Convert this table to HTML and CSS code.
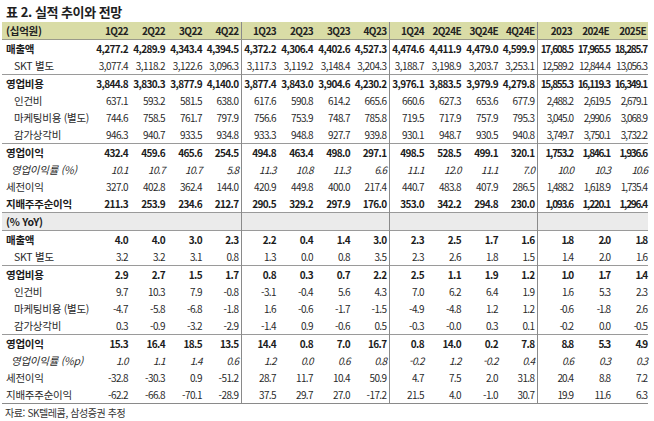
FILE: index.html
```html
<!DOCTYPE html>
<html lang="ko">
<head>
<meta charset="utf-8">
<link rel="stylesheet" href="styles.css">
</head>
<body>
<div class="page">
<div class="title">표 2. 실적 추이와 전망</div>
<table class="fin">
<colgroup><col class="c-label"><col span="15" class="c-num"></colgroup>
<thead>
<tr class="hd"><th class="l">(십억원)</th><th>1Q22</th><th>2Q22</th><th>3Q22</th><th class="v">4Q22</th><th>1Q23</th><th>2Q23</th><th>3Q23</th><th class="v">4Q23</th><th>1Q24</th><th>2Q24E</th><th>3Q24E</th><th class="v">4Q24E</th><th>2023</th><th>2024E</th><th>2025E</th></tr>
</thead>
<tbody>
<tr class="b"><td class="l">매출액</td><td>4,277.2</td><td>4,289.9</td><td>4,343.4</td><td class="v">4,394.5</td><td>4,372.2</td><td>4,306.4</td><td>4,402.6</td><td class="v">4,527.3</td><td>4,474.6</td><td>4,411.9</td><td>4,479.0</td><td class="v">4,599.9</td><td>17,608.5</td><td>17,965.5</td><td>18,285.7</td></tr>
<tr><td class="l in">SKT 별도</td><td>3,077.4</td><td>3,118.2</td><td>3,122.6</td><td class="v">3,096.3</td><td>3,117.3</td><td>3,119.2</td><td>3,148.4</td><td class="v">3,204.3</td><td>3,188.7</td><td>3,198.9</td><td>3,203.7</td><td class="v">3,253.1</td><td>12,589.2</td><td>12,844.4</td><td>13,056.3</td></tr>
<tr class="b sep"><td class="l">영업비용</td><td>3,844.8</td><td>3,830.3</td><td>3,877.9</td><td class="v">4,140.0</td><td>3,877.4</td><td>3,843.0</td><td>3,904.6</td><td class="v">4,230.2</td><td>3,976.1</td><td>3,883.5</td><td>3,979.9</td><td class="v">4,279.8</td><td>15,855.3</td><td>16,119.3</td><td>16,349.1</td></tr>
<tr><td class="l in">인건비</td><td>637.1</td><td>593.2</td><td>581.5</td><td class="v">638.0</td><td>617.6</td><td>590.8</td><td>614.2</td><td class="v">665.6</td><td>660.6</td><td>627.3</td><td>653.6</td><td class="v">677.9</td><td>2,488.2</td><td>2,619.5</td><td>2,679.1</td></tr>
<tr><td class="l in">마케팅비용 (별도)</td><td>744.6</td><td>758.5</td><td>761.7</td><td class="v">797.9</td><td>756.6</td><td>753.9</td><td>748.7</td><td class="v">785.8</td><td>719.5</td><td>717.9</td><td>757.9</td><td class="v">795.3</td><td>3,045.0</td><td>2,990.6</td><td>3,068.9</td></tr>
<tr><td class="l in">감가상각비</td><td>946.3</td><td>940.7</td><td>933.5</td><td class="v">934.8</td><td>933.3</td><td>948.8</td><td>927.7</td><td class="v">939.8</td><td>930.1</td><td>948.7</td><td>930.5</td><td class="v">940.8</td><td>3,749.7</td><td>3,750.1</td><td>3,732.2</td></tr>
<tr class="b sep"><td class="l">영업이익</td><td>432.4</td><td>459.6</td><td>465.6</td><td class="v">254.5</td><td>494.8</td><td>463.4</td><td>498.0</td><td class="v">297.1</td><td>498.5</td><td>528.5</td><td>499.1</td><td class="v">320.1</td><td>1,753.2</td><td>1,846.1</td><td>1,936.6</td></tr>
<tr class="it"><td class="l im">영업이익률 (%)</td><td>10.1</td><td>10.7</td><td>10.7</td><td class="v">5.8</td><td>11.3</td><td>10.8</td><td>11.3</td><td class="v">6.6</td><td>11.1</td><td>12.0</td><td>11.1</td><td class="v">7.0</td><td>10.0</td><td>10.3</td><td>10.6</td></tr>
<tr><td class="l">세전이익</td><td>327.0</td><td>402.8</td><td>362.4</td><td class="v">144.0</td><td>420.9</td><td>449.8</td><td>400.0</td><td class="v">217.4</td><td>440.7</td><td>483.8</td><td>407.9</td><td class="v">286.5</td><td>1,488.2</td><td>1,618.9</td><td>1,735.4</td></tr>
<tr class="b"><td class="l">지배주주순이익</td><td>211.3</td><td>253.9</td><td>234.6</td><td class="v">212.7</td><td>290.5</td><td>329.2</td><td>297.9</td><td class="v">176.0</td><td>353.0</td><td>342.2</td><td>294.8</td><td class="v">230.0</td><td>1,093.6</td><td>1,220.1</td><td>1,296.4</td></tr>
<tr class="gray sep b"><td class="l">(% YoY)</td><td></td><td></td><td></td><td class="v"></td><td></td><td></td><td></td><td class="v"></td><td></td><td></td><td></td><td class="v"></td><td></td><td></td><td></td></tr>
<tr class="b sep"><td class="l">매출액</td><td>4.0</td><td>4.0</td><td>3.0</td><td class="v">2.3</td><td>2.2</td><td>0.4</td><td>1.4</td><td class="v">3.0</td><td>2.3</td><td>2.5</td><td>1.7</td><td class="v">1.6</td><td>1.8</td><td>2.0</td><td>1.8</td></tr>
<tr><td class="l in">SKT 별도</td><td>3.2</td><td>3.2</td><td>3.1</td><td class="v">0.8</td><td>1.3</td><td>0.0</td><td>0.8</td><td class="v">3.5</td><td>2.3</td><td>2.6</td><td>1.8</td><td class="v">1.5</td><td>1.4</td><td>2.0</td><td>1.6</td></tr>
<tr class="b sep"><td class="l">영업비용</td><td>2.9</td><td>2.7</td><td>1.5</td><td class="v">1.7</td><td>0.8</td><td>0.3</td><td>0.7</td><td class="v">2.2</td><td>2.5</td><td>1.1</td><td>1.9</td><td class="v">1.2</td><td>1.0</td><td>1.7</td><td>1.4</td></tr>
<tr><td class="l in">인건비</td><td>9.7</td><td>10.3</td><td>7.9</td><td class="v">-0.8</td><td>-3.1</td><td>-0.4</td><td>5.6</td><td class="v">4.3</td><td>7.0</td><td>6.2</td><td>6.4</td><td class="v">1.9</td><td>1.6</td><td>5.3</td><td>2.3</td></tr>
<tr><td class="l in">마케팅비용 (별도)</td><td>-4.7</td><td>-5.8</td><td>-6.8</td><td class="v">-1.8</td><td>1.6</td><td>-0.6</td><td>-1.7</td><td class="v">-1.5</td><td>-4.9</td><td>-4.8</td><td>1.2</td><td class="v">1.2</td><td>-0.6</td><td>-1.8</td><td>2.6</td></tr>
<tr><td class="l in">감가상각비</td><td>0.3</td><td>-0.9</td><td>-3.2</td><td class="v">-2.9</td><td>-1.4</td><td>0.9</td><td>-0.6</td><td class="v">0.5</td><td>-0.3</td><td>-0.0</td><td>0.3</td><td class="v">0.1</td><td>-0.2</td><td>0.0</td><td>-0.5</td></tr>
<tr class="b sep"><td class="l">영업이익</td><td>15.3</td><td>16.4</td><td>18.5</td><td class="v">13.5</td><td>14.4</td><td>0.8</td><td>7.0</td><td class="v">16.7</td><td>0.8</td><td>14.0</td><td>0.2</td><td class="v">7.8</td><td>8.8</td><td>5.3</td><td>4.9</td></tr>
<tr class="it"><td class="l im">영업이익률 (%p)</td><td>1.0</td><td>1.1</td><td>1.4</td><td class="v">0.6</td><td>1.2</td><td>0.0</td><td>0.6</td><td class="v">0.8</td><td>-0.2</td><td>1.2</td><td>-0.2</td><td class="v">0.4</td><td>0.6</td><td>0.3</td><td>0.3</td></tr>
<tr><td class="l">세전이익</td><td>-32.8</td><td>-30.3</td><td>0.9</td><td class="v">-51.2</td><td>28.7</td><td>11.7</td><td>10.4</td><td class="v">50.9</td><td>4.7</td><td>7.5</td><td>2.0</td><td class="v">31.8</td><td>20.4</td><td>8.8</td><td>7.2</td></tr>
<tr class="last"><td class="l">지배주주순이익</td><td>-62.2</td><td>-66.8</td><td>-70.1</td><td class="v">-28.9</td><td>37.5</td><td>29.7</td><td>27.0</td><td class="v">-17.2</td><td>21.5</td><td>4.0</td><td>-1.0</td><td class="v">30.7</td><td>19.9</td><td>11.6</td><td>6.3</td></tr>
</tbody>
</table>
<div class="source">자료: SK텔레콤, 삼성증권 추정</div>
</div>
</body>
</html>
```

FILE: styles.css
```css
html, body {
  margin: 0;
  padding: 0;
  background: #ffffff;
}

body {
  font-family: "Noto Sans CJK KR", "Noto Sans", sans-serif;
  color: #222222;
}

.page {
  padding: 3px 0 0 2px;
}

.title {
  font-size: 13px;
  font-weight: 700;
  letter-spacing: -0.45px;
  line-height: 18px;
  height: 19px;
  padding-left: 4px;
  color: #1e1e1e;
}

.fin {
  border-collapse: collapse;
  table-layout: fixed;
  width: 646px;
  font-size: 10px;
}

.c-label {
  width: 91px;
}

.c-num {
  width: 37px;
}

.fin th,
.fin td {
  height: 17px;
  padding: 0 2px 0 0;
  line-height: 16px;
  text-align: right;
  white-space: nowrap;
  letter-spacing: -0.6px;
  overflow: visible;
  font-weight: 400;
  color: #2a2a2a;
}

.fin td:nth-child(n+14) {
  letter-spacing: -1px;
  padding-right: 1px;
}

.fin .b td:nth-child(n+14) {
  letter-spacing: -1.2px;
}

.fin .l {
  text-align: left;
  padding-left: 4px;
  font-size: 10.5px;
  letter-spacing: -0.25px;
}

.fin .in {
  padding-left: 12px;
}

.fin .im {
  padding-left: 9px;
}

.fin .v {
  border-right: 1px solid #8a8a8a;
}

.hd th {
  background: #d9dca6;
  font-weight: 700;
  color: #222222;
  border-bottom: 1px solid #9a9a8a;
}

.b td {
  font-weight: 700;
  color: #1c1c1c;
}

.it td {
  font-style: italic;
}

.sep td {
  border-top: 1px solid #9a9a9a;
}

.gray td {
  background: #ebebeb;
}

.last td {
  border-bottom: 1px solid #8a8a8a;
}

.source {
  font-size: 10px;
  letter-spacing: -0.4px;
  color: #333333;
  padding: 2px 0 0 3px;
  line-height: 14px;
}
```
